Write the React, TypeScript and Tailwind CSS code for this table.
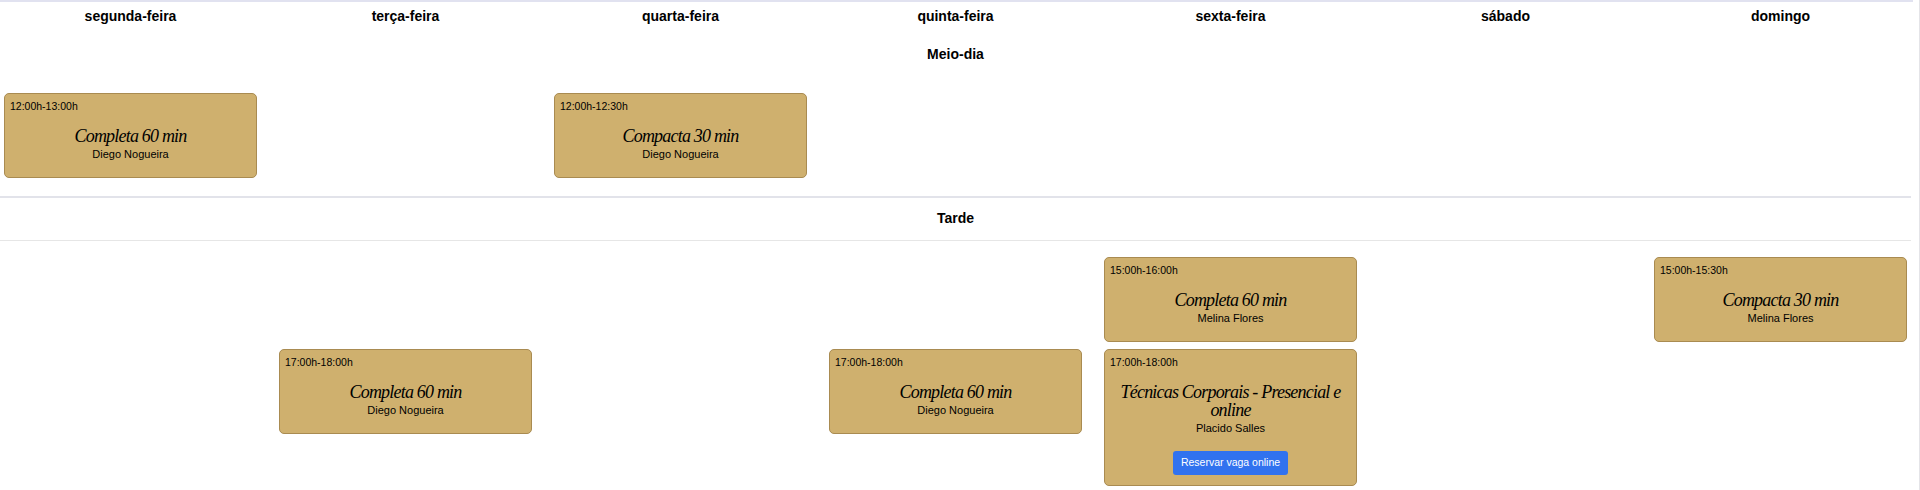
import React from "react";

type Slot = {
  col: number;
  row: number;
  time: string;
  title: string;
  teacher: string;
  online?: boolean;
};

const days = ["segunda-feira", "terça-feira", "quarta-feira", "quinta-feira", "sexta-feira", "sábado", "domingo"];

const sections: { name: string; slots: Slot[] }[] = [
  {
    name: "Meio-dia",
    slots: [
      { col: 1, row: 1, time: "12:00h-13:00h", title: "Completa 60 min", teacher: "Diego Nogueira" },
      { col: 3, row: 1, time: "12:00h-12:30h", title: "Compacta 30 min", teacher: "Diego Nogueira" },
    ],
  },
  {
    name: "Tarde",
    slots: [
      { col: 5, row: 1, time: "15:00h-16:00h", title: "Completa 60 min", teacher: "Melina Flores" },
      { col: 7, row: 1, time: "15:00h-15:30h", title: "Compacta 30 min", teacher: "Melina Flores" },
      { col: 2, row: 2, time: "17:00h-18:00h", title: "Completa 60 min", teacher: "Diego Nogueira" },
      { col: 4, row: 2, time: "17:00h-18:00h", title: "Completa 60 min", teacher: "Diego Nogueira" },
      {
        col: 5,
        row: 2,
        time: "17:00h-18:00h",
        title: "Técnicas Corporais - Presencial e online",
        teacher: "Placido Salles",
        online: true,
      },
    ],
  },
];

const colStart = ["", "col-start-1", "col-start-2", "col-start-3", "col-start-4", "col-start-5", "col-start-6", "col-start-7"];
const rowStart = ["", "row-start-1", "row-start-2"];

function ClassCard({ slot }: { slot: Slot }) {
  return (
    <div
      className={`${colStart[slot.col]} ${rowStart[slot.row]} self-start rounded-[5px] border border-[#a98b51] bg-[#cfb06e] px-[5px] pt-[6px] pb-[10px] text-black`}
    >
      <div className="text-[10.5px] leading-[13px]">{slot.time}</div>
      <div className="mt-[14px] px-2 text-center font-['Liberation_Serif',serif] text-[18px] italic leading-[18px] tracking-[-0.8px]">
        {slot.title}
      </div>
      <div className="mt-[3px] pb-[6px] text-center text-[11px] leading-[13px]">{slot.teacher}</div>
      {slot.online && (
        <div className="mt-[10px] flex justify-center">
          <button type="button" className="h-[24px] rounded-[3px] bg-[#3172ef] px-[8px] text-[10.5px] text-white">
            Reservar vaga online
          </button>
        </div>
      )}
    </div>
  );
}

export default function App() {
  return (
    <div className="h-[490px] w-[1920px] overflow-hidden border-r border-[#e4e4e8] bg-white font-['Liberation_Sans',Arial,sans-serif] text-black">
      <div className="w-[1913px] border-t-2 border-[#e1e2f0]">
        <div className="w-[1911px]">
          <div className="grid grid-cols-[repeat(7,253px)] gap-x-[22px] px-[4px] pt-[4px] pb-[8px]">
            {days.map((d) => (
              <div key={d} className="text-center text-[14px] font-bold leading-[20px]">
                {d}
              </div>
            ))}
          </div>

          {sections.map((s, i) => (
            <div key={s.name} className={i > 0 ? "border-t-2 border-[#e2e3ea]" : ""}>
              <div
                className={`pt-[10px] pb-[12px] text-center text-[14px] font-bold leading-[20px] border-b ${
                  i > 0 ? "border-[#e6e6e6]" : "border-transparent"
                }`}
              >
                {s.name}
              </div>
              <div className="grid grid-cols-[repeat(7,253px)] gap-x-[22px] gap-y-[7px] px-[4px] pt-[16px] pb-[18px]">
                {s.slots.map((slot) => (
                  <ClassCard key={`${slot.col}-${slot.row}`} slot={slot} />
                ))}
              </div>
            </div>
          ))}
        </div>
      </div>
    </div>
  );
}
